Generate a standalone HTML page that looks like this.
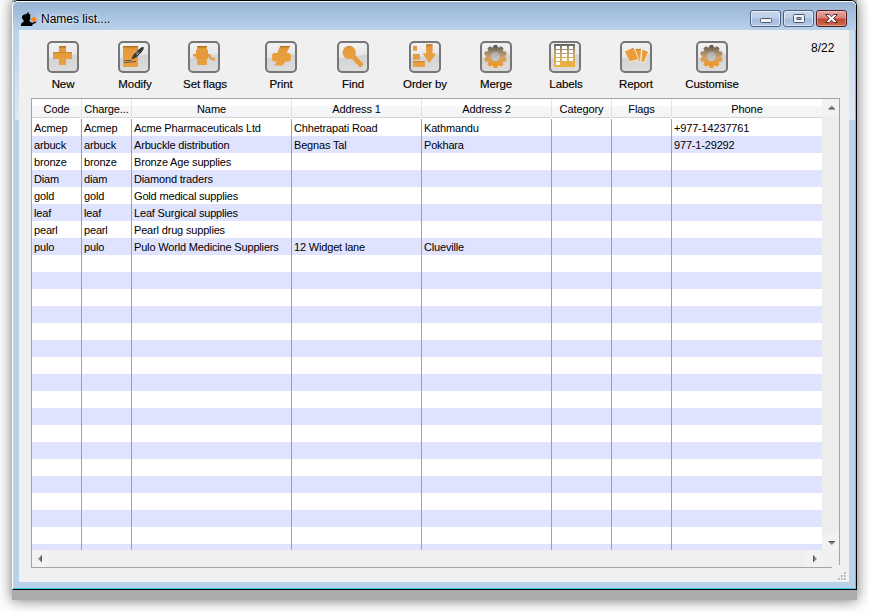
<!DOCTYPE html>
<html lang="en"><head><meta charset="utf-8"><title>Names list....</title>
<style>
html,body{margin:0;padding:0;background:#fff;}
body{width:869px;height:612px;overflow:hidden;position:relative;font-family:"Liberation Sans",sans-serif;font-size:12px;color:#000;}
body > *{position:absolute;}
#shadow{left:12px;top:0;width:845px;height:600px;background:#ababab;box-shadow:0 0 12px 0 rgba(0,0,0,.5),0 0 22px 0 rgba(0,0,0,.1);}
#win{left:12px;top:0;width:845px;height:590px;box-sizing:border-box;border:1px solid #000;border-left-color:#fff;border-radius:6px 6px 0 0;background:#b9d1ea;box-shadow:inset -1px -1px 0 0 #3fd2f2;}
#titlebar{left:13px;top:1px;width:843px;height:29px;border-radius:5px 5px 0 0;box-shadow:inset 0 1px 0 rgba(255,255,255,.95);background:linear-gradient(#98b3d2 0%,#a5c0de 45%,#b9d2eb 100%);}
#client{left:19px;top:30px;width:830px;height:552px;background:#f0f0f0;}
#tbl{left:31px;top:98px;width:809px;height:470px;background:#f0f0f0;overflow:hidden;}
#tbl::before{content:'';position:absolute;left:1px;top:1px;width:790px;height:451px;background:#fff;}
#tbl > *{position:absolute;}
#thead{left:1px;top:1px;width:791px;height:19px;background:#fff;}
.th{top:1px;height:18px;line-height:20px;text-align:center;font-size:11px;background:linear-gradient(#fff 0,#fff 7px,#f5f6f8 7px,#f3f4f6 18px);border-bottom:1px solid #d5d5d5;white-space:nowrap;letter-spacing:-.1px;}
.hsep{top:1px;width:1px;height:18px;background:#e0e3e8;}
.stripe{left:1px;width:790px;background:#dfe3fe;}
.vline{top:21px;width:1px;height:431px;background:#a0a0a0;}
.td{font-size:11px;line-height:17px;height:17px;white-space:nowrap;letter-spacing:-.17px;margin-top:1px;}
#vscroll{left:791px;top:1px;width:17px;height:451px;background:#ededed;}
#hscroll{left:1px;top:452px;width:790px;height:17px;background:#efefef;}
#count{left:811px;top:41px;font-size:12px;line-height:14px;}
#grip{left:838px;top:572px;width:9px;height:9px;}
#grip i{position:absolute;width:2px;height:2px;background:#bcbcbc;box-shadow:1px 1px 0 #fff;}
#appicon{left:20px;top:11px;}
#title{left:41px;top:11px;font-size:12px;line-height:16px;white-space:nowrap;text-shadow:0 0 4px rgba(255,255,255,.9),0 0 7px rgba(255,255,255,.7);}
.wb{top:10px;height:17px;box-sizing:border-box;border:1px solid #4f6080;border-radius:3px;background:linear-gradient(#c6d8ee 0%,#bccfe8 48%,#a5bddd 52%,#b2c8e6 100%);box-shadow:inset 0 0 0 1px rgba(255,255,255,.55);}
.wb svg{display:block;}
.wb.cl{border-color:#4d1a22;background:linear-gradient(#e5a69b 0%,#d6827a 48%,#c2452b 52%,#cf6a50 100%);box-shadow:inset 0 0 0 1px rgba(255,255,255,.35);}
.ib{top:41px;width:32px;height:32px;box-sizing:border-box;border:2px solid #767676;border-radius:5px;background:linear-gradient(172deg,#f3f3f3 0%,#e7e7e7 46%,#d3d3d3 50%,#dedede 100%);}
.ib svg{display:block;}
.lb{top:77px;width:62px;text-align:center;font-size:11.5px;line-height:15px;white-space:nowrap;letter-spacing:-.1px;-webkit-text-stroke:.15px #000;}
#tbl .bt{left:0;top:0;width:809px;height:1px;background:#a3a3ad;}
#tbl .bl{left:0;top:0;width:1px;height:470px;background:#a3a3ad;}
#tbl .br{left:808px;top:0;width:1px;height:467px;background:#a3a3ad;}
#tbl .bb{left:0;top:469px;width:801px;height:1px;background:#a3a3ad;}
.arr{position:absolute;width:17px;height:17px;background:#f2f2f2;}
.arr svg{display:block;}
.arr.up{left:0;top:0}.arr.down{left:0;bottom:0}.arr.left{left:0;top:0}.arr.right{right:0;top:0}
#fl{left:15px;top:30px;width:4px;height:90px;background:linear-gradient(rgba(255,255,255,0),rgba(255,255,255,.5));}
#fr{left:849px;top:30px;width:6px;height:90px;background:linear-gradient(rgba(255,255,255,.25),rgba(255,255,255,.5));}

</style></head>
<body>
<div id="shadow"></div>
<div id="win"></div>
<div id="titlebar"></div>
<div id="client"></div>
<div id="fl"></div><div id="fr"></div>
<svg id="appicon" width="18" height="16" viewBox="0 0 18 16"><path d="M8.300 .800L9 3.200L10.600 3.400L10.100 5L10.400 7.600L9.500 9.600L10.100 11L12.500 11.700L16 10.500L16.300 11.600L12.700 13.300L12.100 14.900H.900L1.300 12.400L3.900 10.200L3.300 9L2 7.300L2.100 4.900L3.900 3.500L6.400 2.900Z" fill="#000"/><path d="M12.800 5.700h2.100v1.600h1.600v2.100h-1.600v1.600h-2.100v-1.600h-1.600v-2.100h1.600z" fill="#ff7d14"/></svg>
<div id="title">Names list....</div>
<div class="wb" style="left:750px;width:31px"><svg width="29" height="15" viewBox="0 0 28 15"><rect x="9" y="7.500" width="11" height="4" rx="1" fill="#f4f6fa" stroke="#4d566b"/></svg></div>
<div class="wb" style="left:783px;width:31px"><svg width="29" height="15" viewBox="0 0 28 15"><rect x="9" y="3.500" width="11" height="8" rx="1" fill="#f4f6fa" stroke="#4d566b"/><rect x="12.500" y="6.500" width="4" height="2" fill="#8fa6c8" stroke="#4d566b"/></svg></div>
<div class="wb cl" style="left:816px;width:31px"><svg width="29" height="15" viewBox="0 0 29 15"><path d="M8.500 3.500h3.700l2.300 2.300l2.300-2.300h3.700l-4 4l4 4h-3.700l-2.300-2.300l-2.300 2.300h-3.700l4-4z" fill="#fff" stroke="#4a3238" stroke-width="1" stroke-linejoin="round"/></svg></div>
<div class="ib" style="left:47px"><svg width="28" height="28" viewBox="0 0 28 28"><defs><linearGradient id="mg" x1="0" y1="0" x2="0" y2="1"><stop offset="0" stop-color="#a86c20"/><stop offset=".14" stop-color="#e69a3c"/><stop offset="1" stop-color="#eaa040"/></linearGradient></defs><rect x="10" y="3" width="7" height="19" fill="url(#mg)"/><rect x="4" y="9" width="19" height="7" fill="url(#mg)"/><rect x="10" y="10.500" width="7" height="4" fill="#e69a3c"/></svg></div>
<div class="lb" style="left:32px">New</div>
<div class="ib" style="left:118px"><svg width="28" height="28" viewBox="0 0 28 28"><rect x="3" y="3" width="15" height="21" fill="url(#mg)"/><path d="M4 17.500h7.200M4 19.700L16 18.500" stroke="#3c4658" stroke-width=".8" fill="none"/><path d="M11.7 16.4L12.9 15.9L15.6 14.7L18.8 12.2L21.5 9.2L23.2 6.7L23.9 5.1L23.8 4.4L23.4 4.0L22.7 4.0L21.1 4.6L18.6 6.4L15.7 9.1L13.2 12.3L11.9 15.0L11.5 16.2Z" fill="#3a3a3a"/><path d="M18.6 12.5L15.3 9.3M19.7 11.4L16.4 8.1" stroke="#e4e4e4" stroke-width=".7" fill="none"/></svg></div>
<div class="lb" style="left:104px">Modify</div>
<div class="ib" style="left:188px"><svg width="28" height="28" viewBox="0 0 28 28"><g fill="#e69a3c"><rect x="7.200" y="3" width="9.700" height="19" fill="url(#mg)"/><rect x="6" y="7" width="12" height="9"/><rect x="3" y="11" width="17.400" height="2.600"/><path d="M18 11h2.400v2.600l1.500 1.200h2.900v2.700h-2.900v-1l-1.500 0l-1.500-1.800z"/></g></svg></div>
<div class="lb" style="left:174px">Set flags</div>
<div class="ib" style="left:265px"><svg width="28" height="28" viewBox="0 0 28 28"><path d="M13.350 3H23L19.800 10.100h1.600q2.500 0 2.500 2.500v3.500q0 2.500-2.500 2.500H18.600L15.400 22.500H7.200L9.800 18.600H7.600q-2.500 0-2.500-2.500v-3.500q0-2.500 2.500-2.500H10.100Z" fill="url(#mg)"/></svg></div>
<div class="lb" style="left:250px">Print</div>
<div class="ib" style="left:337px"><svg width="28" height="28" viewBox="0 0 28 28"><path d="M12 11.300L22.900 22.900" stroke="#e69a3c" stroke-width="5" fill="none"/><circle cx="10.200" cy="9.500" r="6.600" fill="url(#mg)"/></svg></div>
<div class="lb" style="left:322px">Find</div>
<div class="ib" style="left:409px"><svg width="28" height="28" viewBox="0 0 28 28"><rect x="2" y="3" width="4" height="4.700" fill="url(#mg)"/><rect x="2" y="11.200" width="6.900" height="5.500" fill="url(#mg)"/><rect x="2" y="18" width="11.900" height="5.900" fill="url(#mg)"/><path d="M15.100 1.300h6.500v9.100h3.500l-6.750 9.700l-6.750-9.700h3.500z" fill="url(#mg)"/></svg></div>
<div class="lb" style="left:394px">Order by</div>
<div class="ib" style="left:480px"><svg width="28" height="28" viewBox="0 0 28 28"><defs><linearGradient id="gg" x1="0" y1="0" x2="0" y2="1"><stop offset="0" stop-color="#59524c"/><stop offset=".3" stop-color="#a08a6c"/><stop offset=".55" stop-color="#cfa26c"/><stop offset=".8" stop-color="#e89a3a"/><stop offset="1" stop-color="#ee9428"/></linearGradient><linearGradient id="hg" x1="0" y1="0" x2="0" y2="1"><stop offset="0" stop-color="#a8a8a8"/><stop offset="1" stop-color="#cfcfcf"/></linearGradient></defs><g id="gear"><path fill="url(#gg)" stroke="url(#gg)" stroke-width="1" stroke-linejoin="round" d="M11.65 4.39L12.15 2.48L14.85 2.48L15.35 4.39L17.36 5.04L18.88 3.79L21.07 5.38L20.36 7.22L21.59 8.92L23.56 8.81L24.40 11.38L22.74 12.45L22.74 14.55L24.40 15.62L23.56 18.19L21.59 18.08L20.36 19.78L21.07 21.62L18.88 23.21L17.36 21.96L15.35 22.61L14.85 24.52L12.15 24.52L11.65 22.61L9.64 21.96L8.12 23.21L5.93 21.62L6.64 19.78L5.41 18.08L3.44 18.19L2.60 15.62L4.26 14.55L4.26 12.45L2.60 11.38L3.44 8.81L5.41 8.92L6.64 7.22L5.93 5.38L8.12 3.79L9.64 5.04Z"/><circle cx="13.500" cy="13.500" r="4.600" fill="url(#hg)"/></g></svg></div>
<div class="lb" style="left:465px">Merge</div>
<div class="ib" style="left:549px"><svg width="28" height="28" viewBox="0 0 28 28"><defs><linearGradient id="lg" x1="0" y1="0" x2="0" y2="1"><stop offset="0" stop-color="#5e5e5c"/><stop offset=".15" stop-color="#8e8474"/><stop offset=".4" stop-color="#c4a574"/><stop offset=".7" stop-color="#e0ae50"/><stop offset="1" stop-color="#ecb23c"/></linearGradient></defs><rect x="3" y="1" width="21" height="23" fill="url(#lg)"/><g fill="#fff"><rect x="5" y="3" width="4" height="3"/><rect x="11" y="3" width="5" height="3"/><rect x="18" y="3" width="4" height="3"/><rect x="5" y="7" width="4" height="3"/><rect x="11" y="7" width="5" height="3"/><rect x="18" y="7" width="4" height="3"/><rect x="5" y="11" width="4" height="3"/><rect x="11" y="11" width="5" height="3"/><rect x="18" y="11" width="4" height="3"/><rect x="5" y="15" width="4" height="3"/><rect x="11" y="15" width="5" height="3"/><rect x="18" y="15" width="4" height="3"/><rect x="5" y="19" width="4" height="3"/></g></svg></div>
<div class="lb" style="left:535px">Labels</div>
<div class="ib" style="left:620px"><svg width="28" height="28" viewBox="0 0 28 28"><g fill="url(#mg)" stroke="#fff" stroke-width=".7"><path d="M20.100 6.300l6.500 2.300l-4.700 11.200l-3.300-1z"/><path d="M12.800 5.400h6.700l-.900 13l-5-.900z"/><path d="M2.200 8.350l9.400-4.150l5.300 12.100l-9.400 2.600z"/></g></svg></div>
<div class="lb" style="left:605px">Report</div>
<div class="ib" style="left:696px"><svg width="28" height="28" viewBox="0 0 28 28"><use href="#gear"/></svg></div>
<div class="lb" style="left:681px">Customise</div>
<div id="tbl">
<div id="thead"></div>
<div class="th" style="left:1px;width:49px">Code</div>
<div class="th" style="left:51px;width:49px">Charge...</div>
<div class="hsep" style="left:50px"></div>
<div class="th" style="left:101px;width:159px">Name</div>
<div class="hsep" style="left:100px"></div>
<div class="th" style="left:261px;width:129px">Address 1</div>
<div class="hsep" style="left:260px"></div>
<div class="th" style="left:391px;width:129px">Address 2</div>
<div class="hsep" style="left:390px"></div>
<div class="th" style="left:521px;width:59px">Category</div>
<div class="hsep" style="left:520px"></div>
<div class="th" style="left:581px;width:59px">Flags</div>
<div class="hsep" style="left:580px"></div>
<div class="th" style="left:641px;width:150px">Phone</div>
<div class="hsep" style="left:640px"></div>
<div class="hsep" style="left:791px"></div>
<div class="stripe" style="top:38px;height:17px"></div>
<div class="stripe" style="top:72px;height:17px"></div>
<div class="stripe" style="top:106px;height:17px"></div>
<div class="stripe" style="top:140px;height:17px"></div>
<div class="stripe" style="top:174px;height:17px"></div>
<div class="stripe" style="top:208px;height:17px"></div>
<div class="stripe" style="top:242px;height:17px"></div>
<div class="stripe" style="top:276px;height:17px"></div>
<div class="stripe" style="top:310px;height:17px"></div>
<div class="stripe" style="top:344px;height:17px"></div>
<div class="stripe" style="top:378px;height:17px"></div>
<div class="stripe" style="top:412px;height:17px"></div>
<div class="stripe" style="top:446px;height:6px"></div>
<div class="vline" style="left:50px"></div>
<div class="vline" style="left:100px"></div>
<div class="vline" style="left:260px"></div>
<div class="vline" style="left:390px"></div>
<div class="vline" style="left:520px"></div>
<div class="vline" style="left:580px"></div>
<div class="vline" style="left:640px"></div>
<div class="td" style="left:3px;top:21px">Acmep</div>
<div class="td" style="left:53px;top:21px">Acmep</div>
<div class="td" style="left:103px;top:21px">Acme Pharmaceuticals Ltd</div>
<div class="td" style="left:263px;top:21px">Chhetrapati Road</div>
<div class="td" style="left:393px;top:21px">Kathmandu</div>
<div class="td" style="left:643px;top:21px">+977-14237761</div>
<div class="td" style="left:3px;top:38px">arbuck</div>
<div class="td" style="left:53px;top:38px">arbuck</div>
<div class="td" style="left:103px;top:38px">Arbuckle distribution</div>
<div class="td" style="left:263px;top:38px">Begnas Tal</div>
<div class="td" style="left:393px;top:38px">Pokhara</div>
<div class="td" style="left:643px;top:38px">977-1-29292</div>
<div class="td" style="left:3px;top:55px">bronze</div>
<div class="td" style="left:53px;top:55px">bronze</div>
<div class="td" style="left:103px;top:55px">Bronze Age supplies</div>
<div class="td" style="left:3px;top:72px">Diam</div>
<div class="td" style="left:53px;top:72px">diam</div>
<div class="td" style="left:103px;top:72px">Diamond traders</div>
<div class="td" style="left:3px;top:89px">gold</div>
<div class="td" style="left:53px;top:89px">gold</div>
<div class="td" style="left:103px;top:89px">Gold medical supplies</div>
<div class="td" style="left:3px;top:106px">leaf</div>
<div class="td" style="left:53px;top:106px">leaf</div>
<div class="td" style="left:103px;top:106px">Leaf Surgical supplies</div>
<div class="td" style="left:3px;top:123px">pearl</div>
<div class="td" style="left:53px;top:123px">pearl</div>
<div class="td" style="left:103px;top:123px">Pearl drug supplies</div>
<div class="td" style="left:3px;top:140px">pulo</div>
<div class="td" style="left:53px;top:140px">pulo</div>
<div class="td" style="left:103px;top:140px">Pulo World Medicine Suppliers</div>
<div class="td" style="left:263px;top:140px">12 Widget lane</div>
<div class="td" style="left:393px;top:140px">Clueville</div>
<svg width="0" height="0" style="position:absolute"><defs><linearGradient id="ad" x1="0" y1="0" x2="0" y2="1"><stop offset="0" stop-color="#4f4f4f"/><stop offset="1" stop-color="#b4b4b4"/></linearGradient><linearGradient id="au" x1="0" y1="1" x2="0" y2="0"><stop offset="0" stop-color="#4f4f4f"/><stop offset="1" stop-color="#b4b4b4"/></linearGradient><linearGradient id="ar" x1="0" y1="0" x2="1" y2="0"><stop offset="0" stop-color="#4f4f4f"/><stop offset="1" stop-color="#b4b4b4"/></linearGradient><linearGradient id="al" x1="1" y1="0" x2="0" y2="0"><stop offset="0" stop-color="#4f4f4f"/><stop offset="1" stop-color="#b4b4b4"/></linearGradient></defs></svg>
<div id="vscroll"><div class="arr up"><svg width="17" height="17"><path d="M6 10.500h7.500l-3.750-4.200z" fill="url(#au)"/></svg></div><div class="arr down"><svg width="17" height="17"><path d="M6 8h7.500l-3.750 4.200z" fill="url(#ad)"/></svg></div></div>
<div id="hscroll"><div class="arr left"><svg width="17" height="17"><path d="M10 5v7.500l-4.200-3.750z" fill="url(#al)"/></svg></div><div class="arr right"><svg width="17" height="17"><path d="M8 5v7.500l4.200-3.750z" fill="url(#ar)"/></svg></div></div>
<div class="bt"></div><div class="bl"></div><div class="br"></div><div class="bb"></div>
</div>
<div id="count">8/22</div>
<div id="grip"><i style="left:6px;top:0"></i><i style="left:3px;top:3px"></i><i style="left:6px;top:3px"></i><i style="left:0;top:6px"></i><i style="left:3px;top:6px"></i><i style="left:6px;top:6px"></i></div>
</body></html>
